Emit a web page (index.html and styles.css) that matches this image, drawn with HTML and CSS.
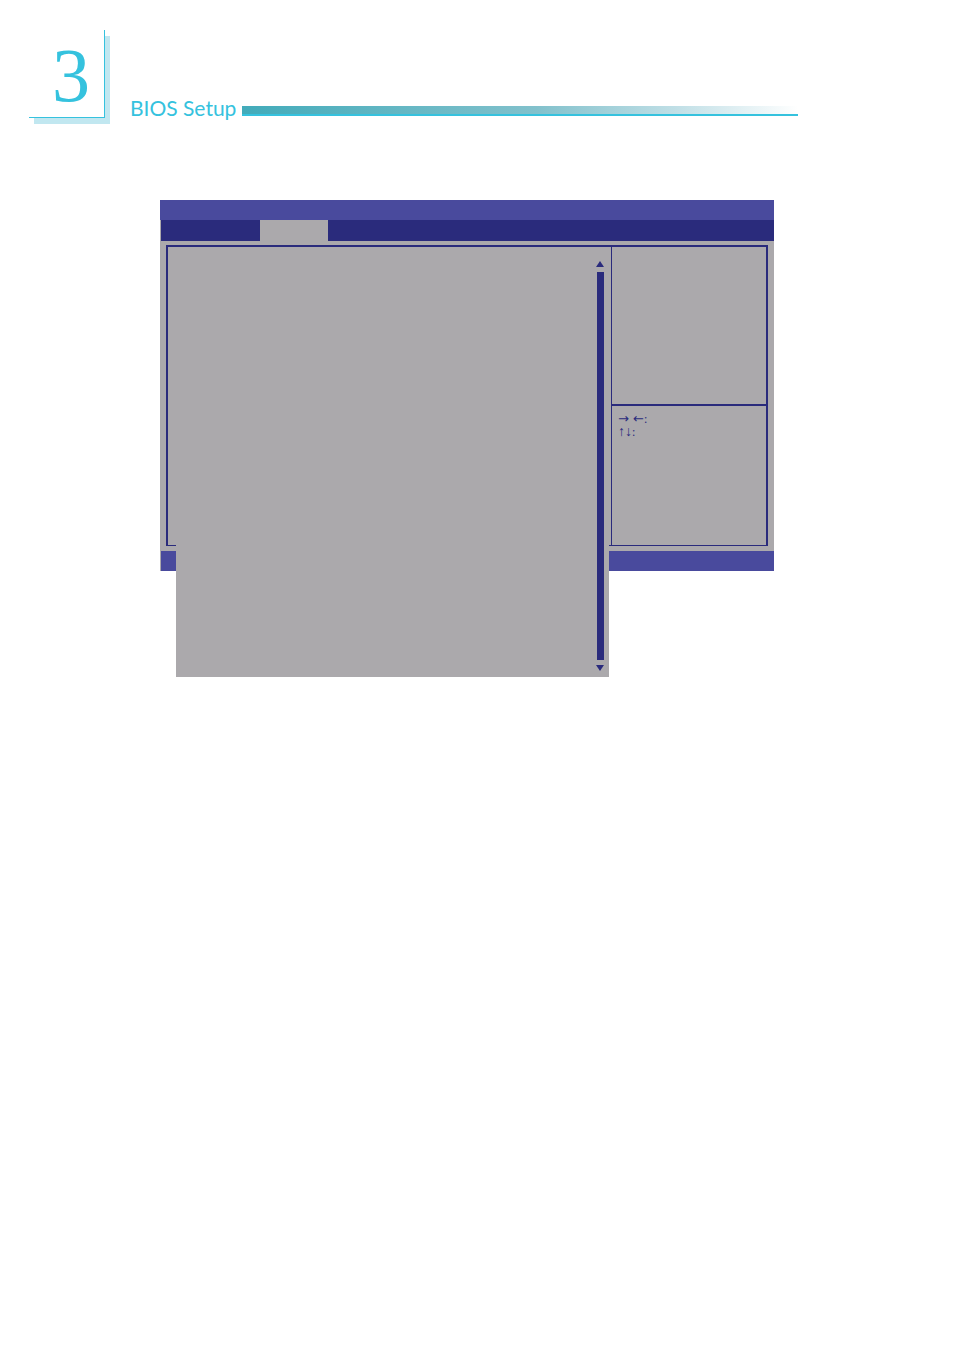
FILE: index.html
```html
<!DOCTYPE html>
<html lang="en">
<head>
<meta charset="utf-8">
<title>BIOS Setup</title>
<link rel="stylesheet" href="styles.css">
</head>
<body>
<header class="chapter">
  <div class="chapter-number">3</div>
  <h1 class="chapter-title">BIOS Setup</h1>
  <div class="chapter-rule"></div>
</header>
<main class="bios">
  <div class="bios-title"></div>
  <div class="bios-tabs"><div class="bios-tab-active"></div></div>
  <div class="bios-frame">
    <section class="bios-content">
      <div class="bios-list">
        <div class="scrollbar">
          <svg class="scroll-arrow" viewBox="0 0 8 6"><path d="M4 0L8 6H0Z"/></svg>
          <div class="scroll-track"></div>
          <svg class="scroll-arrow" viewBox="0 0 8 6"><path d="M0 0H8L4 6Z"/></svg>
        </div>
      </div>
    </section>
    <aside class="bios-side">
      <div class="bios-help"></div>
      <div class="bios-keys">
        <p class="key"><span class="arrows-wide">→ ←</span>:</p>
        <p class="key"><span class="arrows-tall">↑↓</span>:</p>
      </div>
    </aside>
  </div>
  <div class="bios-footer"></div>
</main>
</body>
</html>
```
FILE: styles.css
```css
* { box-sizing: border-box; }

body {
  min-height: 100vh;
  margin: 0;
  background: #fff;
  font-family: "Liberation Serif", serif;
}

.chapter {
  display: flex;
  align-items: flex-end;
  padding: 30px 156px 0 29px;
  color: #35c2de;
}

.chapter-number {
  flex: none;
  width: 76px;
  height: 88px;
  padding-left: 23px;
  border-right: 1px solid #35c2de;
  border-bottom: 1px solid #35c2de;
  background: #fff;
  box-shadow: 5px 6px 0 #c1e7f0;
  font-size: 76px;
  line-height: 90px;
}

.chapter-title {
  flex: none;
  width: 112px;
  height: 22px;
  margin: 0 0 0 25px;
  font: 400 21px/24px Lato, sans-serif;
  white-space: nowrap;
}

.chapter-rule {
  flex: 1;
  height: 10px;
  margin-bottom: 2px;
  border-bottom: 2px solid #35c2de;
  background: linear-gradient(to right, #42abba, #82c1cc 53%, #c0dfe6 78%, #fff);
}

.bios {
  margin: 82px 180px 0 160px;
  background: #aba9ac;
}

.bios-title {
  height: 20px;
  background: #494a9d;
}

.bios-tabs {
  height: 21px;
  margin-left: 1px;
  padding-left: 99px;
  background: #2a2b7c;
}

.bios-tab-active {
  width: 68px;
  height: 100%;
  background: #aba9ac;
}

.bios-frame {
  display: flex;
  height: 301px;
  margin: 4px 6px 5px;
  border: 2px solid #2a2b7c;
  border-bottom-width: 1px;
}

.bios-content {
  position: relative;
  flex: 1;
}

/* The option list is taller than the frame and runs over the footer. */
.bios-list {
  position: absolute;
  inset: 13px 2px -132px 8px;
  display: flex;
  justify-content: flex-end;
  padding: 1px 5px 6px 0;
  background: #aba9ac;
}

.scrollbar {
  display: flex;
  flex-direction: column;
  align-items: center;
  gap: 5px;
}

.scroll-arrow {
  width: 8px;
  height: 6px;
  fill: #2a2b7c;
}

.scroll-track {
  flex: 1;
  width: 7px;
  background: #2a2b7c;
}

.bios-side {
  display: flex;
  flex-direction: column;
  width: 155px;
  border-left: 1px solid #2a2b7c;
}

.bios-help {
  height: 159px;
  border-bottom: 2px solid #2a2b7c;
}

.bios-keys {
  padding: 6px;
  color: #2a2b7c;
}

.key {
  height: 13px;
  margin: 0;
  font-size: 12px;
  line-height: 13px;
}

.arrows-wide {
  font-family: "DejaVu Sans", sans-serif;
  font-size: 13px;
}

.arrows-tall {
  font-size: 14px;
}

.bios-footer {
  height: 20px;
  margin-left: 1px;
  background: #494a9d;
}
```
